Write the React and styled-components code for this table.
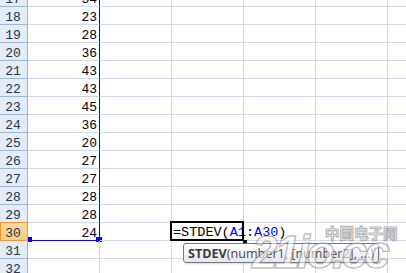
import React from 'react';
import styled, { createGlobalStyle } from 'styled-components';

const GlobalStyle = createGlobalStyle`
  body {
    margin: 0;
    background: #ffffff;
    overflow: hidden;
  }
`;

const rows = [
  { n: 17, v: '34' },
  { n: 18, v: '23' },
  { n: 19, v: '28' },
  { n: 20, v: '36' },
  { n: 21, v: '43' },
  { n: 22, v: '43' },
  { n: 23, v: '45' },
  { n: 24, v: '36' },
  { n: 25, v: '20' },
  { n: 26, v: '27' },
  { n: 27, v: '27' },
  { n: 28, v: '28' },
  { n: 29, v: '28' },
  { n: 30, v: '24' },
  { n: 31, v: '' },
  { n: 32, v: '' },
];

const EXTRA_COLS = 5;

function App() {
  return (
    <Page>
      <GlobalStyle />
      <Sheet>
        {rows.map((r) => {
          const active = r.n === 30;
          const inRange = r.n <= 30;
          return (
            <Row key={r.n}>
              <RowHead $active={active}>{r.n}</RowHead>
              <Cell $selRight={inRange} $selBottom={active}>
                {r.v}
                {active && (
                  <>
                    <Handle $left={0} $w={4} />
                    <Handle $left={68} $w={6} />
                  </>
                )}
              </Cell>
              {Array.from({ length: EXTRA_COLS }).map((_, i) => (
                <Cell key={i}>
                  {active && i === 1 && (
                    <>
                      <EditBox />
                      <FillHandle />
                      <EditText>
                        =STDEV(<Ref>A1</Ref>:<Ref>A30</Ref>)
                      </EditText>
                    </>
                  )}
                </Cell>
              ))}
            </Row>
          );
        })}
      </Sheet>

      <Tip>
        <b>STDEV</b>(number1, [number2], ...)
      </Tip>

      <MarkCn>中国电子网</MarkCn>
      <MarkEn>21io.cc</MarkEn>
    </Page>
  );
}

const Page = styled.div`
  position: relative;
  width: 406px;
  height: 273px;
  overflow: hidden;
  background: #ffffff;
`;

const Sheet = styled.div`
  display: flex;
  flex-direction: column;
  margin-top: -11px;
`;

const Row = styled.div`
  display: grid;
  grid-template-columns: 28px repeat(6, 72px);
  height: 18px;
`;

const RowHead = styled.div`
  box-sizing: border-box;
  display: flex;
  align-items: flex-end;
  justify-content: center;
  background: ${(p) => (p.$active ? 'linear-gradient(#fbd99c, #f8cd80)' : '#e4ecf7')};
  border-right: 1px solid ${(p) => (p.$active ? '#f29436' : '#9eb6ce')};
  border-bottom: 1px solid ${(p) => (p.$active ? '#f29436' : '#9eb6ce')};
  box-shadow: ${(p) => (p.$active ? '0 -1px 0 #f29436, inset 1px 0 0 #f29436' : 'none')};
  font-family: 'Liberation Mono', monospace;
  font-size: 13px;
  line-height: 13px;
  color: #2a3644;
  padding-right: 1px;
  position: relative;
  z-index: ${(p) => (p.$active ? 1 : 0)};
`;

const Cell = styled.div`
  box-sizing: border-box;
  position: relative;
  display: flex;
  align-items: flex-end;
  justify-content: flex-end;
  padding-right: 2px;
  border-right: 1px solid ${(p) => (p.$selRight ? '#0000ff' : '#d0d7e5')};
  border-bottom: 1px solid ${(p) => (p.$selBottom ? '#0000ff' : '#d0d7e5')};
  font-family: 'Liberation Mono', monospace;
  font-size: 13px;
  line-height: 13px;
  color: #000000;
`;

const Handle = styled.span`
  position: absolute;
  left: ${(p) => p.$left}px;
  top: 14px;
  width: ${(p) => p.$w}px;
  height: 5px;
  background: #0000ff;
`;

const EditBox = styled.span`
  position: absolute;
  left: -2px;
  top: -2px;
  width: 74px;
  height: 20px;
  box-sizing: border-box;
  border: 2px solid #000000;
  z-index: 2;
`;

const FillHandle = styled.span`
  position: absolute;
  left: 71px;
  top: 17px;
  width: 4px;
  height: 4px;
  background: #000000;
  z-index: 2;
`;

const EditText = styled.span`
  position: absolute;
  left: 1px;
  top: 0;
  height: 17px;
  padding-right: 3px;
  display: flex;
  align-items: flex-end;
  white-space: nowrap;
  background: #ffffff;
  font-family: 'Liberation Mono', monospace;
  font-size: 13.5px;
  line-height: 14px;
  color: #000000;
  z-index: 1;
`;

const Ref = styled.span`
  color: #0000ff;
`;

const Tip = styled.div`
  position: absolute;
  left: 183px;
  top: 243px;
  height: 20px;
  box-sizing: border-box;
  padding: 0 4px 0 4px;
  display: flex;
  align-items: center;
  border: 1px solid #767676;
  border-radius: 3px;
  background: linear-gradient(#ffffff, #e4e5ee);
  box-shadow: 1px 1px 2px rgba(0, 0, 0, 0.15);
  font-family: 'Open Sans', 'Liberation Sans', sans-serif;
  font-size: 12.6px;
  color: #4c4c4c;
  white-space: nowrap;
  z-index: 3;

  b {
    color: #3a3a3a;
    font-weight: 700;
  }
`;

const MarkCn = styled.div`
  position: absolute;
  left: 325px;
  top: 224px;
  font-family: 'Noto Sans CJK SC', sans-serif;
  font-weight: 700;
  font-size: 14.5px;
  line-height: 1.2;
  color: rgba(255, 255, 255, 0.6);
  -webkit-text-stroke: 1.2px rgba(110, 110, 110, 0.5);
  z-index: 4;
`;

const MarkEn = styled.div`
  position: absolute;
  left: 252px;
  top: 229px;
  font-family: 'Liberation Sans', sans-serif;
  font-weight: 700;
  font-style: italic;
  font-size: 46px;
  line-height: 1;
  letter-spacing: -3px;
  color: rgba(255, 255, 255, 0.55);
  -webkit-text-stroke: 1.4px rgba(110, 110, 110, 0.45);
  z-index: 4;
`;

export default App;
